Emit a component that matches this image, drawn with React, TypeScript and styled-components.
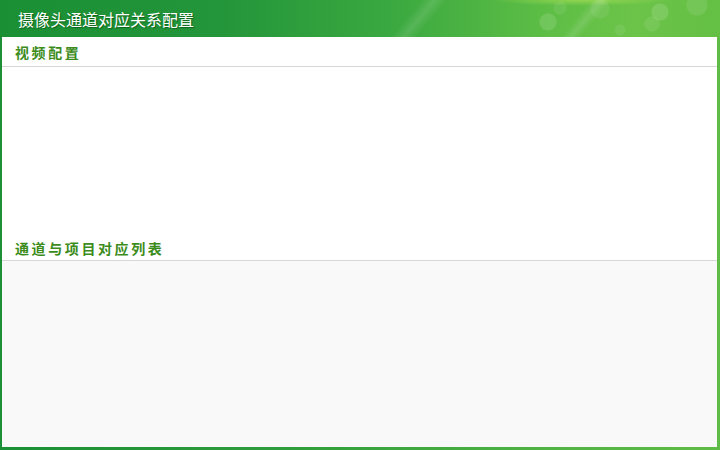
import React from "react";
import styled, { createGlobalStyle } from "styled-components";

const Global = createGlobalStyle`
  html, body { margin: 0; padding: 0; background: #ffffff; }
  * { box-sizing: border-box; }
`;

const Frame = styled.div`
  width: 720px;
  height: 450px;
  display: flex;
  flex-direction: column;
  background: linear-gradient(90deg, #1b9036 0%, #2f9d3c 40%, #4fb343 75%, #5fbc46 100%);
  font-family: "Noto Sans CJK SC", "Noto Sans", sans-serif;
  overflow: hidden;
`;

const Header = styled.div`
  position: relative;
  height: 37px;
  flex: none;
  display: flex;
  align-items: center;
  padding-left: 18px;
  overflow: hidden;
  background:
    radial-gradient(circle at 548px 22px, rgba(255,255,255,0.12) 0 8px, transparent 9px),
    radial-gradient(circle at 600px 9px, rgba(255,255,255,0.07) 0 9px, transparent 10px),
    radial-gradient(circle at 660px 12px, rgba(255,255,255,0.13) 0 8px, transparent 9px),
    radial-gradient(circle at 697px 5px, rgba(255,255,255,0.09) 0 10px, transparent 11px),
    radial-gradient(circle at 560px 8px, rgba(255,255,255,0.07) 0 6px, transparent 7px),
    radial-gradient(circle at 620px 30px, rgba(255,255,255,0.07) 0 5px, transparent 6px),
    radial-gradient(circle at 652px 24px, rgba(255,255,255,0.08) 0 7px, transparent 8px),
    radial-gradient(ellipse at 580px 0px, rgba(190,235,90,0.5) 0, transparent 90px),
    linear-gradient(90deg, #1a8f34 0%, #23953a 30%, #3ba940 55%, #5cbd45 75%, #6cc449 88%, #64bf45 100%);
`;

const Streak = styled.div<{ $x: number; $w: number }>`
  position: absolute;
  top: -10px;
  left: ${(p) => p.$x}px;
  width: ${(p) => p.$w}px;
  height: 60px;
  transform: skewX(-40deg);
  background: linear-gradient(90deg, rgba(255,255,255,0), rgba(255,255,255,0.12), rgba(255,255,255,0));
  pointer-events: none;
`;

const Title = styled.h1`
  position: relative;
  margin: 0;
  font-size: 16px;
  font-weight: 400;
  color: #ffffff;
  text-shadow: 1px 1px 1px rgba(0, 60, 0, 0.55);
`;

const Body = styled.div`
  flex: 1;
  margin: 0 3px 3px 2px;
  background: #ffffff;
  display: flex;
  flex-direction: column;
`;

const SectionHead = styled.div<{ $h: number }>`
  height: ${(p) => p.$h}px;
  flex: none;
  display: flex;
  align-items: center;
  padding-left: 13px;
  border-bottom: 1px solid #d8d8d8;
  font-size: 14px;
  font-weight: 700;
  letter-spacing: 2.6px;
  color: #3c8c1c;
  font-family: "Noto Sans CJK SC", sans-serif;
`;

const Pane = styled.div<{ $h?: number; $bg: string }>`
  ${(p) => (p.$h ? `height: ${p.$h}px; flex: none;` : "flex: 1;")}
  background: ${(p) => p.$bg};
`;

export default function App() {
  return (
    <>
      <Global />
      <Frame>
        <Header>
          <Streak $x={405} $w={26} />
          <Streak $x={575} $w={20} />
          <Title>摄像头通道对应关系配置</Title>
        </Header>
        <Body>
          <SectionHead $h={30}>视频配置</SectionHead>
          <Pane $h={169} $bg="#ffffff" />
          <SectionHead $h={25}>通道与项目对应列表</SectionHead>
          <Pane $bg="#f9f9f9" />
        </Body>
      </Frame>
    </>
  );
}
